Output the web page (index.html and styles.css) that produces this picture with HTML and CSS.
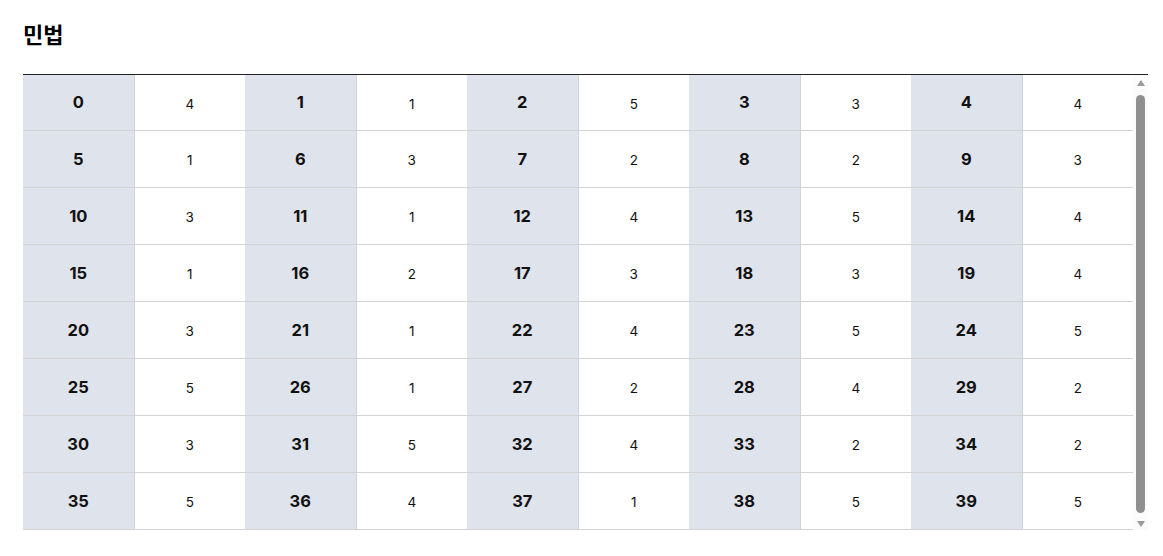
FILE: index.html
```html
<!DOCTYPE html>
<html lang="ko">
<head>
<meta charset="utf-8">
<title>민법</title>
<link rel="stylesheet" href="styles.css">
</head>
<body>
<main class="page">
  <h2 class="title">민법</h2>
  <div class="table-wrap">
    <div class="table-scroll">
      <table class="grid">
        <colgroup>
          <col class="c"><col class="c"><col class="c"><col class="c"><col class="c">
          <col class="c"><col class="c"><col class="c"><col class="c"><col class="c">
        </colgroup>
        <tbody>
          <tr class="first"><th>0</th><td>4</td><th>1</th><td>1</td><th>2</th><td>5</td><th>3</th><td>3</td><th>4</th><td>4</td></tr>
          <tr><th>5</th><td>1</td><th>6</th><td>3</td><th>7</th><td>2</td><th>8</th><td>2</td><th>9</th><td>3</td></tr>
          <tr><th>10</th><td>3</td><th>11</th><td>1</td><th>12</th><td>4</td><th>13</th><td>5</td><th>14</th><td>4</td></tr>
          <tr><th>15</th><td>1</td><th>16</th><td>2</td><th>17</th><td>3</td><th>18</th><td>3</td><th>19</th><td>4</td></tr>
          <tr><th>20</th><td>3</td><th>21</th><td>1</td><th>22</th><td>4</td><th>23</th><td>5</td><th>24</th><td>5</td></tr>
          <tr><th>25</th><td>5</td><th>26</th><td>1</td><th>27</th><td>2</td><th>28</th><td>4</td><th>29</th><td>2</td></tr>
          <tr><th>30</th><td>3</td><th>31</th><td>5</td><th>32</th><td>4</td><th>33</th><td>2</td><th>34</th><td>2</td></tr>
          <tr><th>35</th><td>5</td><th>36</th><td>4</td><th>37</th><td>1</td><th>38</th><td>5</td><th>39</th><td>5</td></tr>
        </tbody>
      </table>
    </div>
    <div class="scrollbar" aria-hidden="true">
      <span class="arrow up"></span>
      <span class="thumb"></span>
      <span class="arrow down"></span>
    </div>
  </div>
</main>
</body>
</html>
```

FILE: styles.css
```css
html, body {
  margin: 0;
  padding: 0;
  background: #ffffff;
}

body {
  font-family: Inter, "Noto Sans CJK KR", sans-serif;
  color: #111111;
}

.page {
  padding: 18px 15px 0 23px;
}

.title {
  margin: 0 0 26px 0;
  font-size: 22px;
  line-height: 30px;
  font-weight: 700;
  font-family: "Noto Sans CJK KR", sans-serif;
  color: #000;
}

.table-wrap {
  width: 1125px;
  height: 456px;
  border-top: 1px solid #222222;
  box-sizing: border-box;
  display: flex;
}

.table-scroll {
  width: 1110px;
  overflow: hidden;
}

.grid {
  width: 1110px;
  border-collapse: collapse;
  table-layout: fixed;
}

.grid .c {
  width: 111px;
}

.grid tr {
  height: 57px;
}

.grid tr.first {
  height: 55px;
}

.grid th,
.grid td {
  padding: 0;
  text-align: center;
  vertical-align: middle;
  border-bottom: 1px solid #d3d3d6;
}

.grid th {
  background: #dfe3eb;
  border-right: 1px solid #d0d3d8;
  font-size: 16.5px;
  font-weight: 700;
  color: #111;
}

.grid td {
  background: #ffffff;
  font-size: 13.5px;
  font-weight: 400;
  color: #111;
  padding-top: 3px;
}

.scrollbar {
  width: 15px;
  display: flex;
  flex-direction: column;
  align-items: center;
  background: #fbfbfb;
  padding-top: 5px;
  box-sizing: border-box;
}

.arrow {
  width: 0;
  height: 0;
  border-left: 4.5px solid transparent;
  border-right: 4.5px solid transparent;
}

.arrow.up {
  border-bottom: 6px solid #9a9a9a;
}

.arrow.down {
  border-top: 6px solid #9a9a9a;
  margin-top: 8px;
}

.thumb {
  width: 9px;
  height: 418px;
  margin-top: 9px;
  border-radius: 5px;
  background: #8f8f8f;
}
```
